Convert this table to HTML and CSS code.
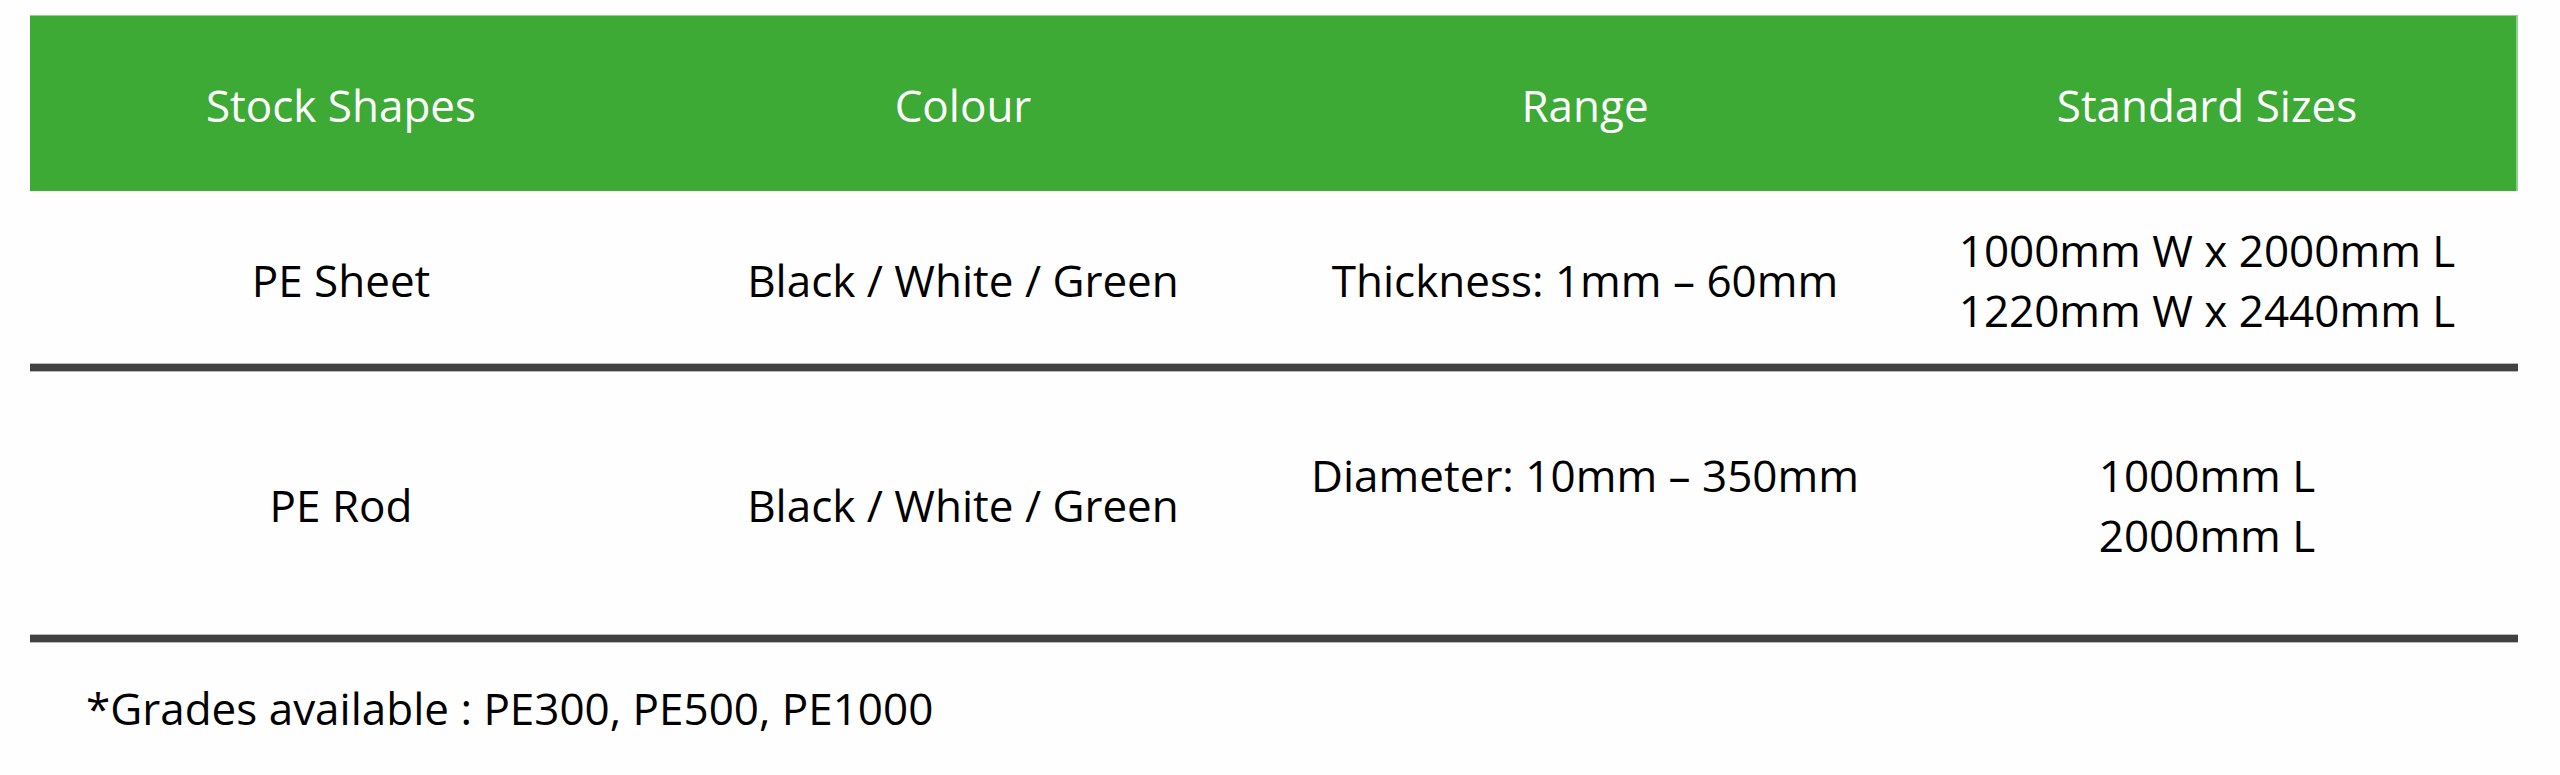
FILE: index.html
```html
<!DOCTYPE html>
<html lang="en">
<head>
<meta charset="utf-8">
<title>PE Stock Shapes</title>
<link rel="stylesheet" href="styles.css">
</head>
<body>
<div class="page">
  <div class="spec-table">
    <div class="row head">
      <div class="cell">Stock Shapes</div>
      <div class="cell">Colour</div>
      <div class="cell">Range</div>
      <div class="cell">Standard Sizes</div>
    </div>
    <div class="row row-sheet">
      <div class="cell">PE Sheet</div>
      <div class="cell">Black / White / Green</div>
      <div class="cell">Thickness: 1mm – 60mm</div>
      <div class="cell">1000mm W x 2000mm L<br>1220mm W x 2440mm L</div>
    </div>
    <div class="rule"></div>
    <div class="row row-rod">
      <div class="cell">PE Rod</div>
      <div class="cell">Black / White / Green</div>
      <div class="cell"><span class="first-line">Diameter: 10mm – 350mm</span></div>
      <div class="cell">1000mm L<br>2000mm L</div>
    </div>
    <div class="rule"></div>
  </div>
  <p class="note">*Grades available : PE300, PE500, PE1000</p>
</div>
</body>
</html>
```

FILE: styles.css
```css
html, body {
  margin: 0;
  padding: 0;
  background: #fefefe;
}

body {
  font-family: "Open Sans", "Liberation Sans", sans-serif;
  font-size: 44px;
  line-height: 60px;
  color: #000;
}

.page {
  padding: 15px 0 0 30px;
  width: 2488px;
}

.spec-table {
  display: flex;
  flex-direction: column;
}

.row {
  display: grid;
  grid-template-columns: repeat(4, 1fr);
}

.cell {
  display: flex;
  align-items: center;
  justify-content: center;
  text-align: center;
  padding-top: 4px;
  box-sizing: border-box;
}

.head {
  height: 176px;
  background: #3caa35;
  color: #fff;
  box-shadow: inset -2px 0 0 #8fd08a, inset 0 1px 0 #8fd08a;
}

.row-sheet {
  height: 173px;
}

.row-rod {
  height: 264px;
}

.first-line {
  padding-bottom: 60px;
}

.rule {
  height: 7px;
  background: #414141;
  border-top: 1px solid #b9b9b9;
  border-bottom: 1px solid #b9b9b9;
  margin: -1px 0;
}

.note {
  margin: 36px 0 0 56px;
}
```
